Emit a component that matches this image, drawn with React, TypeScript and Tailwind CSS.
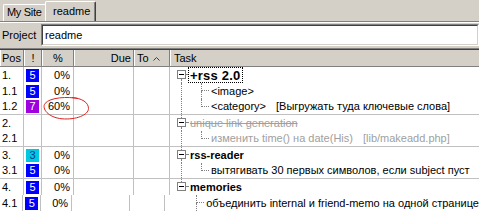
import React from "react"

type Row = {
  pos: string
  pri?: number
  pct?: string
  kind: "parent" | "child"
  text: string
  note?: string
  done?: boolean
  focus?: boolean
  sep?: boolean
  firstRoot?: boolean
  lastRoot?: boolean
  lastChild?: boolean
  rootLine?: boolean
}

const rows: Row[] = [
  { pos: "1.", pri: 5, pct: "0%", kind: "parent", text: "+rss 2.0", focus: true, firstRoot: true },
  { pos: "1.1", pri: 5, pct: "0%", kind: "child", text: "<image>", rootLine: true },
  { pos: "1.2", pri: 7, pct: "60%", kind: "child", text: "<category>", note: "[Выгружать туда ключевые слова]", lastChild: true, rootLine: true, sep: true },
  { pos: "2.", kind: "parent", text: "unique link generation", done: true },
  { pos: "2.1", kind: "child", text: "изменить time() на date(His)", note: "[lib/makeadd.php]", done: true, lastChild: true, rootLine: true, sep: true },
  { pos: "3.", pri: 3, pct: "0%", kind: "parent", text: "rss-reader" },
  { pos: "3.1", pri: 5, pct: "0%", kind: "child", text: "вытягивать 30 первых символов, если subject пуст", lastChild: true, rootLine: true, sep: true },
  { pos: "4.", pri: 5, pct: "0%", kind: "parent", text: "memories", lastRoot: true },
  { pos: "4.1", pri: 5, pct: "0%", kind: "child", text: "объединить internal и friend-memo на одной странице" },
]

const badge: Record<number, string> = {
  5: "bg-[#0000ff] text-white",
  7: "bg-[#a000e0] text-white",
  3: "bg-[#00c8e0] text-[#003c8c]",
}

const dots = "border-dotted border-[#808080]"

function TaskCell({ row }: { row: Row }) {
  const color = row.done ? "text-[#a0a0a0]" : "text-black"

  if (row.kind === "parent") {
    return (
      <div className="flex h-full pl-[7px]">
        <div className="flex w-[9px] flex-col">
          <div className={`ml-[4px] h-[3px] ${row.firstRoot ? "" : "border-l " + dots}`} />
          <div className="flex h-[9px] w-[9px] items-center justify-center border border-[#808080] bg-white">
            <div className="h-px w-[5px] bg-black" />
          </div>
          <div className={`ml-[4px] flex-1 ${row.lastRoot ? "" : "border-l " + dots}`} />
        </div>
        <div className="mt-[7px] h-0 w-[2px] border-t border-dotted border-[#808080]" />
        <span
          className={`flex h-[16px] items-center whitespace-nowrap border px-[1px] ${
            row.focus ? "border-dotted border-black pr-[2px] text-[13px] tracking-[0.2px]" : "border-transparent"
          } ${row.done ? "line-through" : "font-bold"} ${color}`}
        >
          {row.text}
        </span>
      </div>
    )
  }

  return (
    <div className="flex h-full pl-[7px]">
      <div className="flex w-[9px] flex-col">
        <div className={`ml-[4px] flex-1 ${row.rootLine ? "border-l " + dots : ""}`} />
      </div>
      <div className="w-[11px]" />
      <div className="flex w-[12px] flex-col">
        <div className={`ml-[4px] h-[8px] border-b border-l ${dots}`} />
        <div className={`ml-[4px] flex-1 ${row.lastChild ? "" : "border-l " + dots}`} />
      </div>
      <span className={`ml-[2px] flex items-center whitespace-nowrap ${color}`}>
        {row.text}
        {row.note && <span className="ml-[10px]">{row.note}</span>}
      </span>
    </div>
  )
}

function HeadCell({ w, children, className = "" }: { w: string; children?: React.ReactNode; className?: string }) {
  return (
    <div className={`flex h-full items-center border-r border-l border-r-[#808080] border-l-white ${w} ${className}`}>
      {children}
    </div>
  )
}

export default function App() {
  return (
    <div className="relative h-[211px] w-[479px] overflow-hidden bg-[#d4d0c8] font-['Liberation_Sans',Arial,sans-serif] text-[11px] leading-none text-black">
      {/* tabs */}
      <div className="flex h-[21px] items-end pl-[3px]">
        <div className="flex h-[17px] w-[42px] items-center whitespace-nowrap rounded-tl-[2px] border-t border-l border-white pb-[1px] pl-[3px] tracking-[-0.3px]">
          My Site
        </div>
        <div className="flex h-[20px] w-[51px] items-center rounded-t-[2px] border-t border-l border-r border-t-white border-l-white border-r-[#404040] pl-[7px] shadow-[inset_-1px_0_0_#808080]">
          readme
        </div>
      </div>
      <div className="h-px bg-[#808080]" />
      <div className="h-px bg-white" />

      {/* project */}
      <div className="flex h-[25px] items-start pt-[1px]">
        <div className="flex h-[22px] w-[41px] items-center pl-[2px]">Project</div>
        <div className="flex-1 border border-t-[#808080] border-l-[#808080] border-r-white border-b-white">
          <div className="flex h-[20px] items-center border border-t-[#404040] border-l-[#404040] border-r-[#d4d0c8] border-b-[#d4d0c8] bg-white pl-[2px]">
            readme
          </div>
        </div>
      </div>

      {/* list */}
      <div className="border-t border-[#808080]">
        <div className="border-t border-[#404040]">
          <div className="flex h-[17px] border-b border-[#808080]">
            <HeadCell w="w-[24px]" className="border-l-transparent pl-[1px]">Pos</HeadCell>
            <HeadCell w="w-[18px]" className="justify-center">!</HeadCell>
            <HeadCell w="w-[32px]" className="justify-center">%</HeadCell>
            <HeadCell w="w-[60px]" className="justify-end pr-[2px]">Due</HeadCell>
            <HeadCell w="w-[36px]" className="gap-[4px] pl-[2px]">
              To
              <svg width="7" height="4" viewBox="0 0 7 4" className="mt-[1px]">
                <path d="M0.5 3.5 L3.5 0.5 L6.5 3.5" fill="none" stroke="#404040" strokeWidth="1" />
              </svg>
            </HeadCell>
            <div className="flex h-full flex-1 items-center border-l border-white pl-[3px]">Task</div>
          </div>

          <div className="bg-white">
            {rows.map((r) => (
              <div key={r.pos} className={`flex h-[16px] ${r.sep ? "border-b border-[#c0c0c0]" : ""}`}>
                <div className="flex w-[24px] items-center border-r border-[#c0c0c0] pl-[2px]">{r.pos}</div>
                <div className="flex w-[18px] items-center border-r border-[#c0c0c0] pl-[2px]">
                  {r.pri && (
                    <span className={`flex h-[13px] w-[13px] items-center justify-center ${badge[r.pri]}`}>
                      {r.pri}
                    </span>
                  )}
                </div>
                <div className="flex w-[32px] items-center justify-end border-r border-[#c0c0c0] pr-[3px]">{r.pct}</div>
                <div className="w-[60px] border-r border-[#c0c0c0]" />
                <div className="w-[36px] border-r border-[#c0c0c0]" />
                <div className="flex-1">
                  <TaskCell row={r} />
                </div>
              </div>
            ))}
          </div>
        </div>
      </div>

      {/* red mark around 60% */}
      <svg className="pointer-events-none absolute left-[42px] top-[96px]" width="48" height="25" viewBox="0 0 48 25">
        <path
          d="M36 2.5 C26 0.5 8 1.2 3 7.5 C-0.5 12.5 6 21.5 20 22.8 C34 24 46.5 19 46.5 12.5 C46.5 6.5 40 2.2 30 1.6"
          fill="none"
          stroke="#e02020"
          strokeWidth="1"
        />
      </svg>
    </div>
  )
}
